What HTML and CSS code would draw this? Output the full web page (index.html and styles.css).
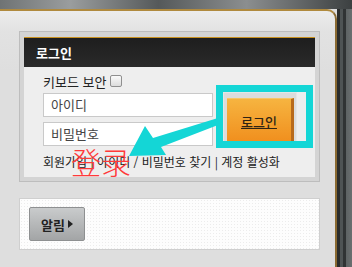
FILE: index.html
```html
<!DOCTYPE html>
<html lang="ko">

<head>
  <meta charset="UTF-8" />
  <meta name="viewport" content="width=device-width, initial-scale=1.0" />
  <title>로그인</title>
  <link rel="stylesheet" href="styles.css">
</head>

<body>
  <div class="top-strip"></div>

  <div class="frame">
    <div class="panel">
      <!-- Login Box -->
      <div class="login-box">
        <div class="login-header">로그인</div>
        <div class="login-body">
          <div class="keyboard">키보드 보안 <span class="check"></span></div>
          <div class="login-row">
            <div class="inputs">
              <div class="field">아이디</div>
              <div class="field">비밀번호</div>
            </div>
            <div class="btn-wrap">
              <div class="login-btn">로그인</div>
            </div>
          </div>
          <div class="links">회원가입 | 아이디 / 비밀번호 찾기 | 계정 활성화</div>
        </div>
      </div>

      <!-- Notice Box -->
      <div class="notice-box">
        <div class="notice-btn">알림 <span class="arrow"></span></div>
      </div>
    </div>
    <div class="side"></div>
  </div>

  <!-- Annotations drawn on top -->
  <div class="mark-box"></div>
  <div class="mark-text">登录</div>
  <svg class="mark-arrow" width="100" height="50" viewBox="0 0 100 50">
    <path d="M98 2 L98 9 L41 31 L46 39 L9 40 L25 10 L33 22 Z" fill="#14d6d6" />
  </svg>
</body>

</html>
```

FILE: styles.css
```css
/* General Styles */
body {
  margin: 0;
  width: 352px;
  height: 267px;
  overflow: hidden;
  position: relative;
  font-family: "Noto Sans CJK KR", "Noto Sans", sans-serif;
  background: #dedede;
}

.top-strip {
  height: 9px;
  background: linear-gradient(90deg, #6f7374, #9a9d9e 20%, #55595a 45%, #8b8e8f 70%, #3c4041 100%);
}

.frame {
  display: flex;
  height: 258px;
}

.panel {
  flex: 1;
  background: linear-gradient(180deg, #ececec, #e2e2e2 20px, #dedede 60px);
  border-top: 2px solid #b08a3e;
  border-right: 2px solid #8a6a32;
  border-top-right-radius: 10px;
  padding: 20px 0 0 19px;
}

.side {
  width: 15px;
  background: linear-gradient(90deg, #2a2c2c 0, #2a2c2c 3px, #4e5354 3px, #4e5354 6px, #303334 6px, #303334 9px, #5d6263 9px, #6a6f70 15px);
}

/* Login Box */
.login-box {
  width: 291px;
  background: #d4d4d4;
  border: 1px solid #bdbdbd;
  padding: 5px 4px 4px 4px;
}

.login-header {
  height: 29px;
  border-top: 1px solid #c8901e;
  background: linear-gradient(180deg, #1e1e1e, #2a2a2a);
  color: #fff;
  font-size: 13px;
  font-weight: bold;
  line-height: 29px;
  padding-left: 12px;
}

.login-body {
  height: 110px;
  background: #eeeeee;
  padding-left: 19px;
  box-sizing: border-box;
  padding-top: 6px;
}

.keyboard {
  display: flex;
  align-items: center;
  gap: 4px;
  height: 16px;
  font-size: 13px;
  color: #222;
}

.check {
  width: 10px;
  height: 10px;
  border: 1px solid #8f8f8f;
  border-radius: 2px;
  background: linear-gradient(180deg, #fafafa, #dcdcdc);
}

.login-row {
  display: flex;
  margin-top: 4px;
  gap: 10px;
}

.inputs {
  display: flex;
  flex-direction: column;
  gap: 5px;
}

.field {
  width: 161px;
  height: 22px;
  border: 1px solid #c9c9c9;
  background: #fff;
  font-size: 13px;
  line-height: 22px;
  color: #444;
  padding-left: 7px;
}

.btn-wrap {
  width: 74px;
  height: 56px;
  margin-top: -1px;
  background: #dcdcdc;
  border: 1px solid #e6e6e6;
  box-sizing: border-box;
  padding: 5px 0 0 3px;
}

.login-btn {
  width: 67px;
  height: 46px;
  background: linear-gradient(180deg, #f6b440, #f08d1c);
  border-top: 1px solid #f7c766;
  border-right: 3px solid #b86a1c;
  box-sizing: border-box;
  font-size: 13px;
  font-weight: 500;
  color: #2e2414;
  text-decoration: underline;
  display: flex;
  align-items: center;
  justify-content: center;
}

.links {
  margin-top: 5px;
  font-size: 12px;
  color: #222;
  white-space: nowrap;
}

/* Notice Box */
.notice-box {
  margin-top: 16px;
  width: 290px;
  height: 42px;
  border: 1px solid #cfcfcf;
  background-color: #fdfdfd;
  background-image: radial-gradient(#ececec 0.6px, transparent 0.8px);
  background-size: 3px 3px;
  padding: 8px 0 0 9px;
}

.notice-btn {
  width: 56px;
  height: 34px;
  box-sizing: border-box;
  border: 1px solid #8e9091;
  border-radius: 2px;
  background: linear-gradient(180deg, #c9cbcc, #a3a5a6);
  display: flex;
  align-items: center;
  justify-content: center;
  gap: 3px;
  font-size: 13px;
  font-weight: bold;
  color: #222;
}

.arrow {
  width: 0;
  height: 0;
  border-top: 4px solid transparent;
  border-bottom: 4px solid transparent;
  border-left: 5px solid #222;
}

/* Annotations */
.mark-box {
  position: absolute;
  left: 216px;
  top: 85px;
  width: 83px;
  height: 49px;
  border: 7px solid #14d6d6;
}

.mark-text {
  position: absolute;
  left: 71px;
  top: 143px;
  font-family: "Noto Sans CJK SC", sans-serif;
  font-weight: 300;
  font-size: 30px;
  line-height: 36px;
  color: #ff3a3a;
}

.mark-arrow {
  position: absolute;
  left: 120px;
  top: 116px;
}
```
